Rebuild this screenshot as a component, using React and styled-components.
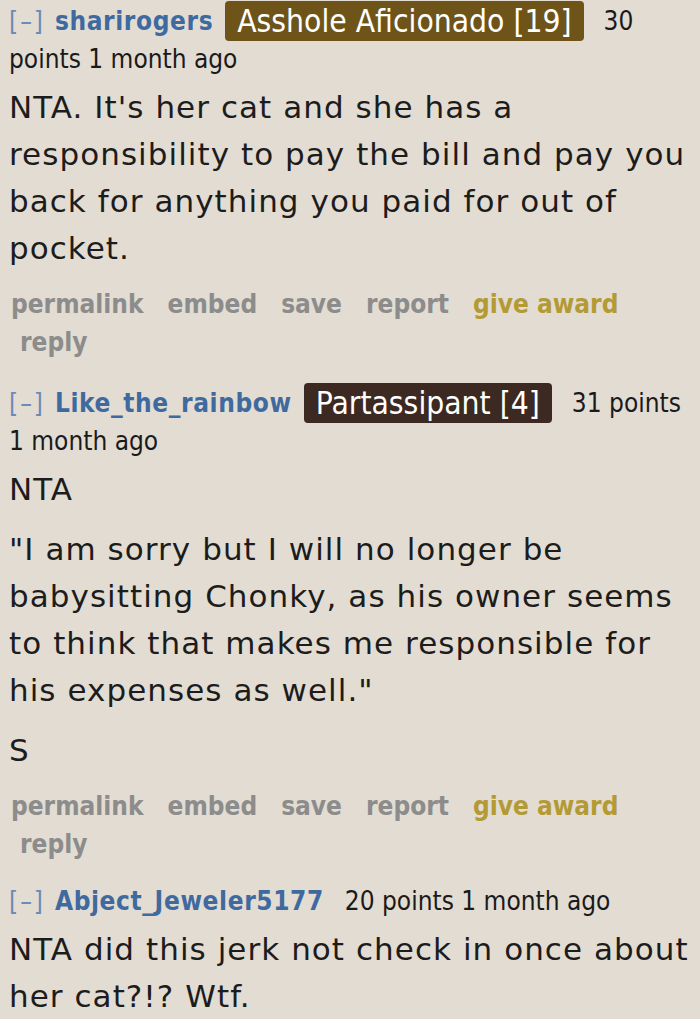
import React from 'react';
import styled, { createGlobalStyle } from 'styled-components';

const GlobalStyle = createGlobalStyle`
  html, body {
    margin: 0;
    padding: 0;
    background: #e3dcd2;
  }
`;

const Page = styled.div`
  width: 700px;
  height: 1019px;
  overflow: hidden;
  background: #e3dcd2;
  padding: 2px 5px 0 9px;
  box-sizing: border-box;
`;

const CommentBlock = styled.div`
  margin-bottom: ${props => props.gap || 22}px;
`;

const Tagline = styled.div`
  font-family: "DejaVu Sans Condensed", "DejaVu Sans", sans-serif;
  font-stretch: condensed;
  font-size: 26px;
  line-height: 38px;
  color: #1a1a1a;
`;

const Expand = styled.span`
  color: #6a8bb8;
  letter-spacing: 2px;
  margin-right: 10px;
`;

const Author = styled.span`
  color: #3f6aa0;
  font-weight: bold;
  letter-spacing: 0.6px;
  margin-right: ${props => (props.flair ? '12px' : '21px')};
`;

const Flair = styled.span`
  display: inline-block;
  background: ${props => props.bg};
  color: #fff;
  font-size: 31.5px;
  line-height: 40px;
  padding: 0 12px;
  margin: -1px 20px -1px 0;
  border-radius: 4px;
  vertical-align: top;
`;

const Time = styled.time`
  white-space: nowrap;
`;

const Body = styled.div`
  font-family: "DejaVu Sans", Verdana, sans-serif;
  font-size: 31px;
  letter-spacing: 1.05px;
  line-height: 47px;
  color: #1c1c1c;
  margin-top: 6px;

  p {
    margin: 0 0 13px 0;
  }
`;

const Buttons = styled.ul`
  list-style: none;
  margin: 0;
  padding: 0 0 0 2px;
  display: flex;
  flex-wrap: wrap;
  column-gap: 24px;
  font-family: "DejaVu Sans Condensed", "DejaVu Sans", sans-serif;
  font-stretch: condensed;
  font-weight: bold;
  font-size: 26px;
  line-height: 38px;
`;

const ButtonItem = styled.li`
  color: ${props => (props.gold ? '#b39a34' : '#8c8c8c')};
  padding-left: ${props => (props.indent ? '9px' : '0')};
`;

function ActionButtons() {
  return (
    <Buttons>
      <ButtonItem>permalink</ButtonItem>
      <ButtonItem>embed</ButtonItem>
      <ButtonItem>save</ButtonItem>
      <ButtonItem>report</ButtonItem>
      <ButtonItem gold>give award</ButtonItem>
      <ButtonItem indent>reply</ButtonItem>
    </Buttons>
  );
}

function Comment({ author, flair, flairBg, score, paragraphs, buttons, gap }) {
  return (
    <CommentBlock gap={gap}>
      <Tagline>
        <Expand>[–]</Expand>
        <Author flair={flair}>{author}</Author>
        {flair && <Flair bg={flairBg}>{flair}</Flair>}
        <span>{score} points</span> <Time>1 month ago</Time>
      </Tagline>
      <Body>
        {paragraphs.map((text, i) => (
          <p key={i}>{text}</p>
        ))}
      </Body>
      {buttons && <ActionButtons />}
    </CommentBlock>
  );
}

export default function App() {
  return (
    <Page>
      <GlobalStyle />
      <Comment
        author="sharirogers"
        flair="Asshole Aficionado [19]"
        flairBg="#6e5419"
        score={30}
        gap={23}
        paragraphs={[
          "NTA. It's her cat and she has a responsibility to pay the bill and pay you back for anything you paid for out of pocket."
        ]}
        buttons
      />
      <Comment
        author="Like_the_rainbow"
        flair="Partassipant [4]"
        flairBg="#3c2921"
        score={31}
        gap={19}
        paragraphs={[
          'NTA',
          '"I am sorry but I will no longer be babysitting Chonky, as his owner seems to think that makes me responsible for his expenses as well."',
          'S'
        ]}
        buttons
      />
      <Comment
        author="Abject_Jeweler5177"
        score={20}
        paragraphs={['NTA did this jerk not check in once about her cat?!? Wtf.']}
      />
    </Page>
  );
}
